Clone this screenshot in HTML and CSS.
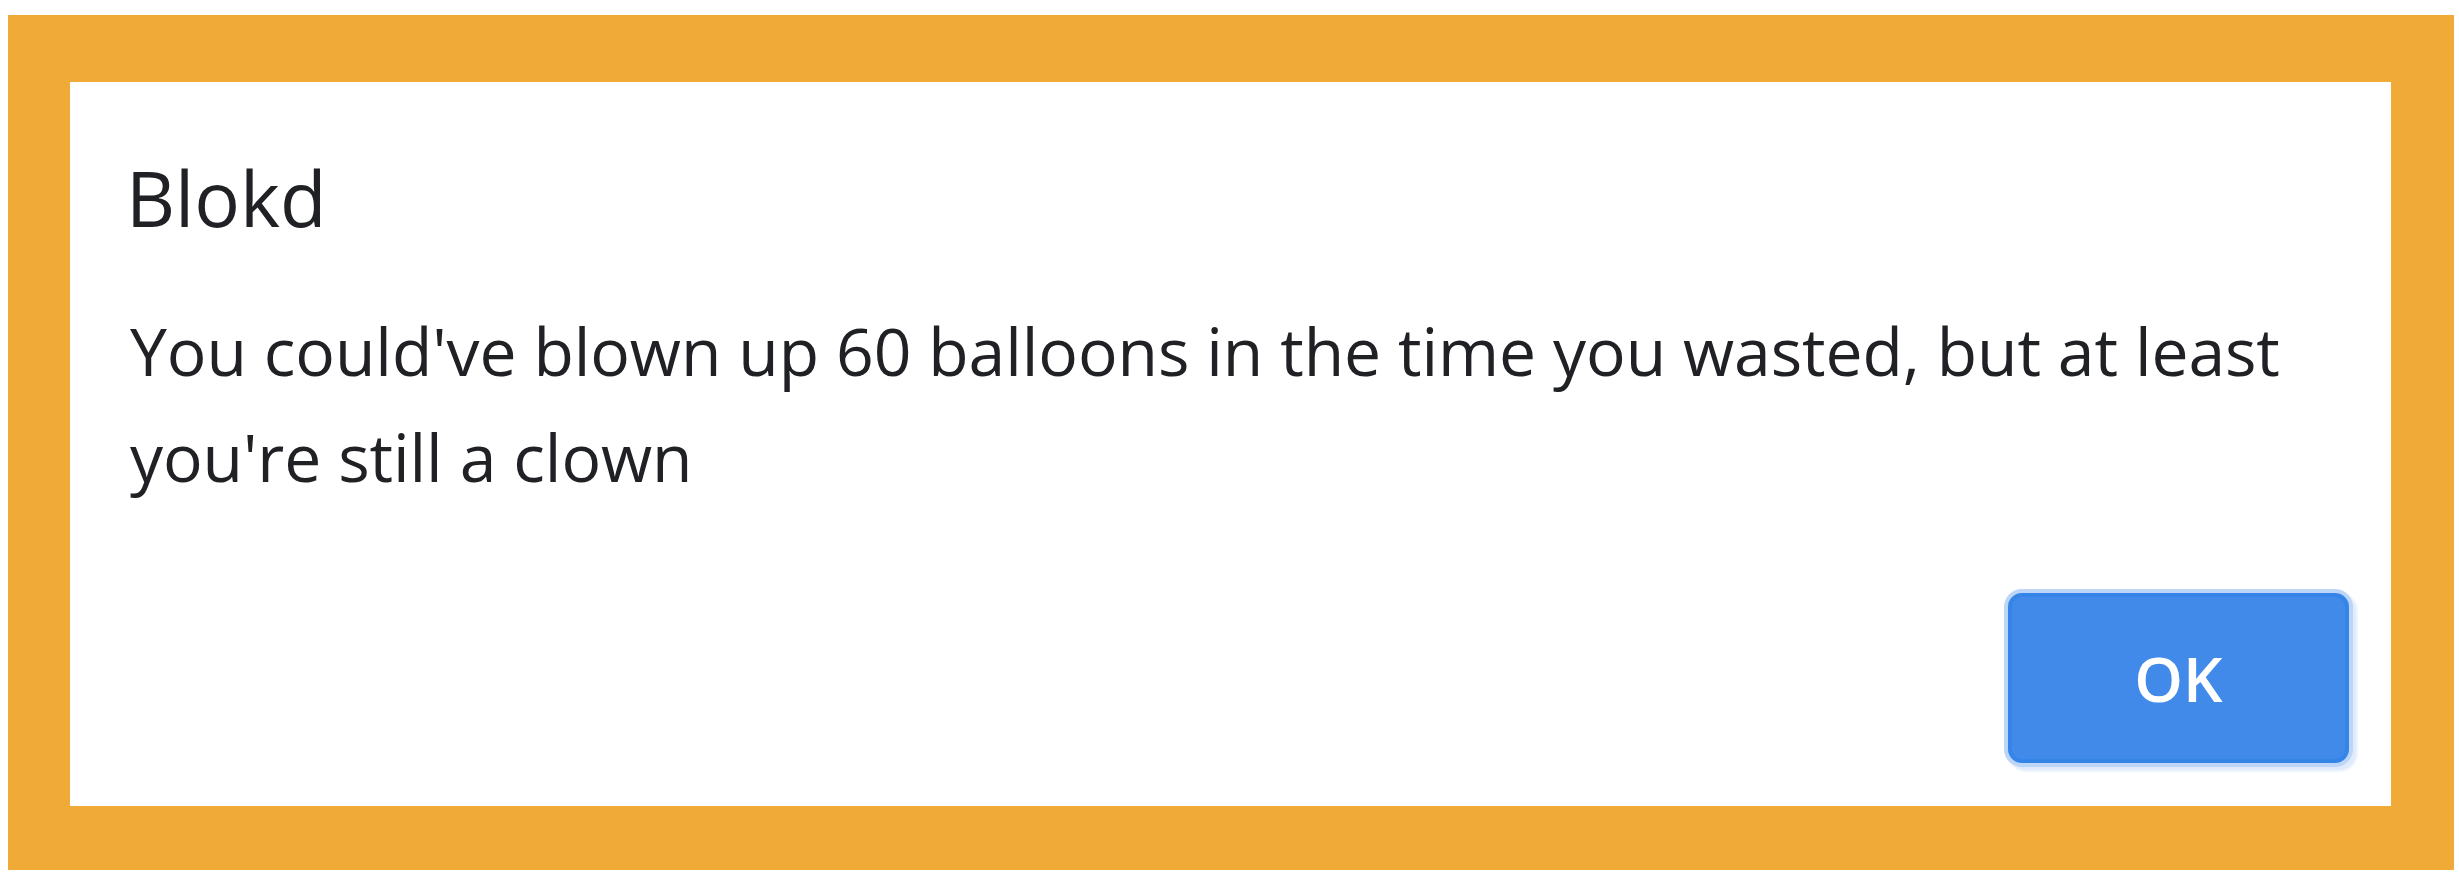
FILE: index.html
```html
<!DOCTYPE html>
<html lang="en">
<head>
<meta charset="utf-8">
<title>Blokd</title>
<link rel="stylesheet" href="styles.css">
</head>
<body>
<div class="frame">
  <div class="dialog">
    <h1 class="title">Blokd</h1>
    <p class="message">You could've blown up 60 balloons in the time you wasted, but at least you're still a clown</p>
    <div class="actions">
      <button class="ok" type="button">OK</button>
    </div>
  </div>
</div>
</body>
</html>
```
FILE: styles.css
```css
html, body {
  margin: 0;
  padding: 0;
  background: #ffffff;
}
body {
  padding: 15px 5px 8px 8px;
  font-family: "Open Sans", "Noto Sans", "Liberation Sans", sans-serif;
  color: #202124;
}
.frame {
  background: #f0aa38;
  padding: 67px 63px 64px 62px;
}
.dialog {
  background: #ffffff;
  height: 724px;
  box-sizing: border-box;
  padding: 66px 42px 43px 56px;
  display: flex;
  flex-direction: column;
}
.title {
  margin: 0;
  font-size: 76px;
  line-height: 100px;
  font-weight: 400;
}
.message {
  margin: 49px 0 0 4px;
  font-size: 66px;
  line-height: 106px;
  font-weight: 400;
  letter-spacing: -0.1px;
}
.actions {
  margin-top: auto;
  display: flex;
  justify-content: flex-end;
}
.ok {
  width: 341px;
  height: 170px;
  box-sizing: border-box;
  border: 4px solid #3585e8;
  border-radius: 14px;
  background: #418aea;
  color: #ffffff;
  font-family: "Open Sans", "Noto Sans", sans-serif;
  font-size: 62px;
  font-weight: 600;
  padding: 0;
  box-shadow: 0 0 0 4px #bdd6f7, 4px 4px 3px 4px #dfeafb;
}
```
